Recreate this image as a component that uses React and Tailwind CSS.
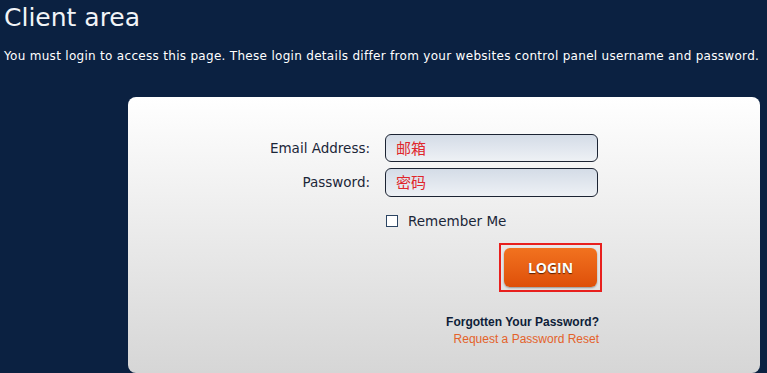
import React from 'react';

export default function App() {
  return (
    <div className="w-[767px] h-[373px] overflow-hidden bg-[#0b2141] text-white" style={{ fontFamily: '"DejaVu Sans", Verdana, sans-serif' }}>
      <h1 className="pl-[4px] pt-[2px] text-[25px] leading-[32px] text-[#f2f4f7]">Client area</h1>
      <p className="pl-[4px] mt-[14px] text-[12px] leading-[16px] tracking-[0.3px] whitespace-nowrap">
        You must login to access this page. These login details differ from your websites control panel username and password.
      </p>

      <div className="ml-[128px] mt-[33px] w-[632px] h-[276px] rounded-[8px] bg-gradient-to-b from-[#ffffff] to-[#d6d6d6] text-[#1b2638]">
        <div className="pt-[37px] grid grid-cols-[242px_213px] gap-x-[15px] gap-y-[6px] items-center text-[13.5px]">
          <label className="text-right">Email Address:</label>
          <div className="h-[28px] rounded-[6px] border border-[#1c2433] bg-gradient-to-b from-[#d4dce7] to-[#eef1f5] flex items-center pl-[10px] text-[15px] text-[#e0262b]" style={{ fontFamily: '"Noto Sans CJK SC", sans-serif' }}>
            邮箱
          </div>
          <label className="text-right">Password:</label>
          <div className="h-[29px] rounded-[6px] border border-[#1c2433] bg-gradient-to-b from-[#d4dce7] to-[#eef1f5] flex items-center pl-[10px] text-[15px] text-[#e0262b]" style={{ fontFamily: '"Noto Sans CJK SC", sans-serif' }}>
            密码
          </div>
          <div />
          <div className="flex items-center gap-[10px] mt-[8px] pl-[1px]">
            <span className="w-[12px] h-[12px] border border-[#2c4563] bg-white" />
            <span>Remember Me</span>
          </div>
          <div />
          <div className="flex justify-end mt-[6px]">
            <div className="mr-[-4px] p-[3px] border-2 border-[#e8201e]">
              <button className="w-[93px] h-[39px] rounded-[6px] bg-gradient-to-b from-[#f2721f] to-[#de4f08] text-white font-bold text-[14px] shadow-[0_1px_2px_rgba(0,0,0,0.35)]" style={{ fontFamily: '"Open Sans", sans-serif', textShadow: '0 1px 1px #5a2000' }}>
                LOGIN
              </button>
            </div>
          </div>
        </div>
        <div className="mt-[22px] w-[471px] text-right text-[12px] leading-[17px]" style={{ fontFamily: '"Liberation Sans", Arial, sans-serif' }}>
          <div className="font-bold text-[#0e1d38]">Forgotten Your Password?</div>
          <div className="text-[#e4622a]">Request a Password Reset</div>
        </div>
      </div>
    </div>
  );
}
